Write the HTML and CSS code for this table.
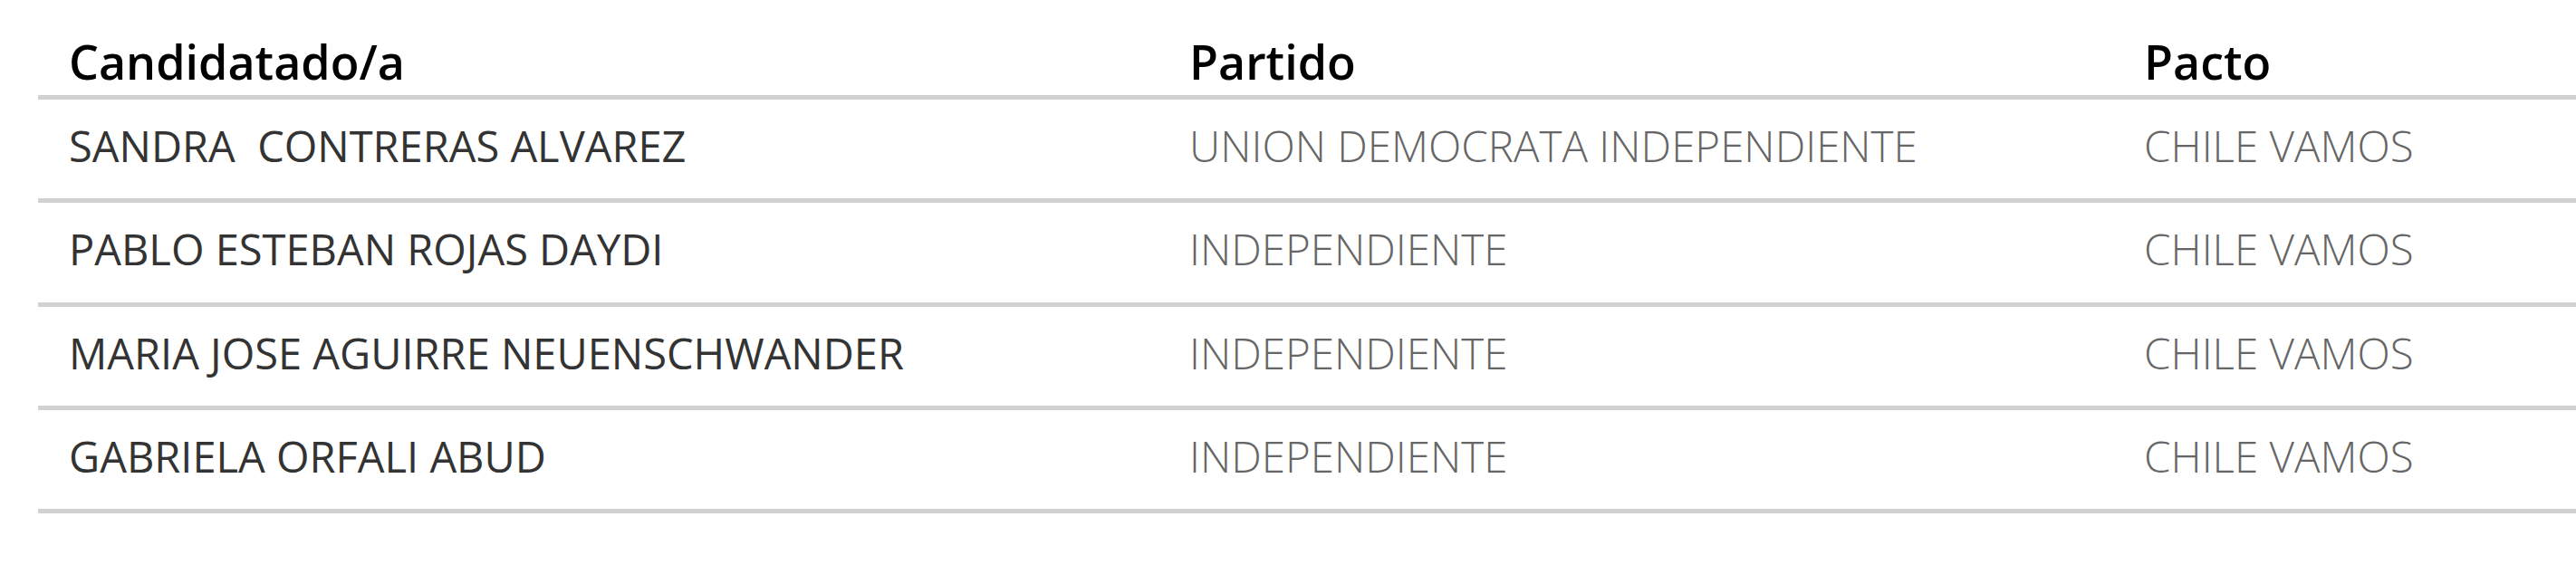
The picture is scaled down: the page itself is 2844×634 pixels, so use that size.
FILE: index.html
```html
<!DOCTYPE html>
<html lang="es">
<head>
<meta charset="utf-8">
<title>Candidatos</title>
<link rel="stylesheet" href="styles.css">
</head>
<body>
<div class="table">
  <div class="row head">
    <div class="cell c1">Candidatado/a</div>
    <div class="cell c2">Partido</div>
    <div class="cell c3">Pacto</div>
  </div>
  <div class="row">
    <div class="cell c1 name">SANDRA&nbsp; CONTRERAS ALVAREZ</div>
    <div class="cell c2 dim">UNION DEMOCRATA INDEPENDIENTE</div>
    <div class="cell c3 dim">CHILE VAMOS</div>
  </div>
  <div class="row">
    <div class="cell c1 name">PABLO ESTEBAN ROJAS DAYDI</div>
    <div class="cell c2 dim">INDEPENDIENTE</div>
    <div class="cell c3 dim">CHILE VAMOS</div>
  </div>
  <div class="row">
    <div class="cell c1 name">MARIA JOSE AGUIRRE NEUENSCHWANDER</div>
    <div class="cell c2 dim">INDEPENDIENTE</div>
    <div class="cell c3 dim">CHILE VAMOS</div>
  </div>
  <div class="row">
    <div class="cell c1 name">GABRIELA ORFALI ABUD</div>
    <div class="cell c2 dim">INDEPENDIENTE</div>
    <div class="cell c3 dim">CHILE VAMOS</div>
  </div>
</div>
</body>
</html>
```
FILE: styles.css
```css
html, body {
  margin: 0;
  padding: 0;
  background: #ffffff;
}

body {
  font-family: "Open Sans", "Noto Sans", sans-serif;
  overflow: hidden;
}

.table {
  margin-left: 42px;
  width: 2802px;
  display: flex;
  flex-direction: column;
}

.row {
  display: grid;
  grid-template-columns: 1237px 1054px 1fr;
  height: 114.3px;
  box-sizing: border-box;
  border-bottom: 5px solid #d1d1d1;
  font-size: 46px;
  line-height: 46px;
}

.row.head {
  height: 110px;
  font-size: 52px;
  line-height: 53px;
  font-weight: 600;
  color: #000000;
}

.cell {
  box-sizing: border-box;
  padding-left: 34px;
  padding-top: 28px;
  white-space: nowrap;
}

.head .cell {
  padding-top: 41px;
}

.name {
  color: #333333;
  font-weight: 400;
  font-size: 47px;
}

.dim {
  color: #666666;
  font-weight: 300;
  font-size: 47.5px;
}
```
